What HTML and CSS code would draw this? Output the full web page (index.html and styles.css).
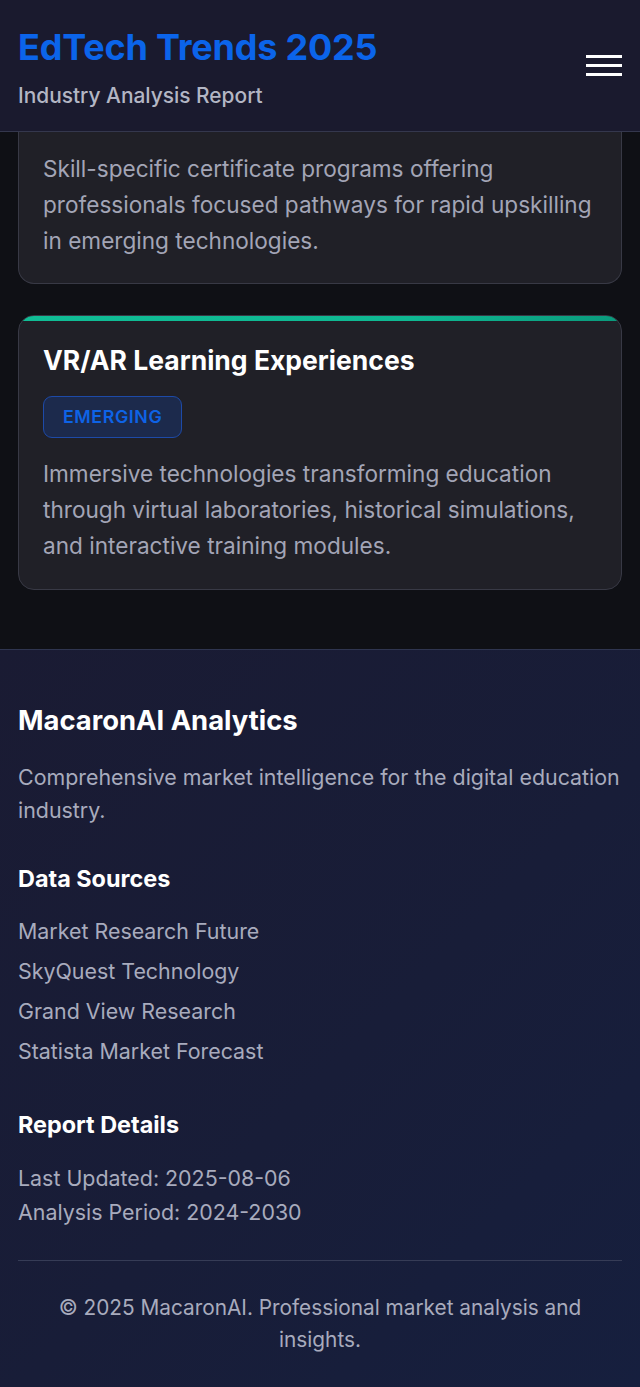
FILE: index.html
```html
<!DOCTYPE html>
<html lang="en">
<head>
<meta charset="utf-8">
<meta name="viewport" content="width=device-width, initial-scale=1">
<title>EdTech Trends 2025</title>
<link rel="stylesheet" href="styles.css">
</head>
<body>
<header class="site-header">
  <div class="brand">
    <h1 class="brand-title">EdTech Trends 2025</h1>
    <p class="brand-sub">Industry Analysis Report</p>
  </div>
  <button class="menu-btn" aria-label="Menu">
    <span class="menu-line"></span>
    <span class="menu-line"></span>
    <span class="menu-line"></span>
  </button>
</header>

<main class="content">
  <article class="card card-cut">
    <p class="card-text">Skill-specific certificate programs offering professionals focused pathways for rapid upskilling in emerging technologies.</p>
  </article>

  <article class="card card-accent">
    <h2 class="card-title">VR/AR Learning Experiences</h2>
    <span class="badge">Emerging</span>
    <p class="card-text">Immersive technologies transforming education through virtual laboratories, historical simulations, and interactive training modules.</p>
  </article>
</main>

<footer class="site-footer">
  <section class="foot-block foot-block-about">
    <h3 class="foot-brand">MacaronAI Analytics</h3>
    <p class="foot-text">Comprehensive market intelligence for the digital education industry.</p>
  </section>
  <section class="foot-block foot-block-sources">
    <h4 class="foot-head">Data Sources</h4>
    <ul class="foot-list">
      <li>Market Research Future</li>
      <li>SkyQuest Technology</li>
      <li>Grand View Research</li>
      <li>Statista Market Forecast</li>
    </ul>
  </section>
  <section class="foot-block foot-block-details">
    <h4 class="foot-head">Report Details</h4>
    <p class="foot-detail">Last Updated: 2025-08-06</p>
    <p class="foot-detail">Analysis Period: 2024-2030</p>
  </section>
  <div class="foot-bottom">
    <p class="copyright">© 2025 MacaronAI. Professional market analysis and insights.</p>
  </div>
</footer>
</body>
</html>
```

FILE: styles.css
```css
* { box-sizing: border-box; }

html, body {
  margin: 0;
  padding: 0;
}

body {
  background: #0f1015;
  font-family: Inter, "Noto Sans", "Liberation Sans", sans-serif;
  color: #ffffff;
}

.site-header {
  background: #1a1a2e;
  border-bottom: 1px solid #34374d;
  height: 132px;
  padding: 2px 18px 0;
  display: flex;
  align-items: center;
  justify-content: space-between;
}

.brand-title {
  margin: 0;
  font-size: 36px;
  line-height: 44px;
  font-weight: 700;
  color: #0b64ea;
  letter-spacing: -0.2px;
}

.brand-sub {
  margin: 14px 0 0;
  font-size: 20.9px;
  line-height: 26px;
  font-weight: 500;
  color: #b3b6c4;
}

.menu-btn {
  background: none;
  border: 0;
  padding: 0;
  width: 36px;
  display: flex;
  flex-direction: column;
  gap: 6.5px;
  margin-top: -2px;
  cursor: pointer;
}

.menu-line {
  display: block;
  height: 2.5px;
  width: 36px;
  background: #ffffff;
}

.content {
  padding: 0 18px 59px;
  display: flex;
  flex-direction: column;
  gap: 31px;
}

.card {
  background: #202027;
  border: 1px solid #383945;
  border-radius: 16px;
  padding: 24px 24px 25px;
  overflow: hidden;
}

.card-cut {
  border-top: 0;
  border-radius: 0 0 16px 16px;
  padding-top: 19px;
  padding-bottom: 24px;
}

.card-accent {
  position: relative;
  padding-top: 23px;
}

.card-accent::before {
  content: "";
  position: absolute;
  left: 0;
  right: 0;
  top: 0;
  height: 5px;
  background: linear-gradient(90deg, #10bd95 0%, #0fb892 65%, #0a9a7c 100%);
}

.card-title {
  margin: 0;
  font-size: 26.5px;
  line-height: 42px;
  font-weight: 700;
  color: #ffffff;
}

.badge {
  display: inline-block;
  margin-top: 15px;
  padding: 8px 19px;
  font-size: 17.8px;
  line-height: 24px;
  font-weight: 600;
  letter-spacing: 0.6px;
  text-transform: uppercase;
  color: #0e63e6;
  background: #1c2a4c;
  border: 1px solid #1d4aa8;
  border-radius: 9px;
}

.card-text {
  margin: 0;
  font-size: 22.6px;
  line-height: 36px;
  color: #a3a5b6;
}

.card-accent .card-text {
  margin-top: 18px;
}

.site-footer {
  border-top: 1px solid #2f3550;
  background: linear-gradient(135deg, #1a1b33 0%, #181d38 55%, #161f3e 100%);
  padding: 53px 18px 31px;
}

.foot-block-about {
  margin-bottom: 37px;
}

.foot-block-sources {
  margin-bottom: 39px;
}

.foot-block-details {
  margin-bottom: 31px;
}

.foot-brand {
  margin: 0;
  font-size: 27.4px;
  line-height: 34px;
  font-weight: 700;
  color: #ffffff;
}

.foot-text {
  margin: 24px 0 0;
  font-size: 21.4px;
  line-height: 33px;
  color: #a8abbd;
}

.foot-head {
  margin: 0;
  font-size: 23.4px;
  line-height: 30px;
  font-weight: 700;
  color: #ffffff;
}

.foot-list {
  list-style: none;
  margin: 17px 0 0;
  padding: 0;
}

.foot-list li {
  font-size: 21.4px;
  line-height: 40px;
  color: #a8abbd;
}

.foot-detail {
  margin: 0;
  font-size: 21.4px;
  line-height: 34px;
  color: #a8abbd;
}

.foot-head + .foot-detail {
  margin-top: 21px;
}

.foot-bottom {
  border-top: 1px solid #363c56;
  padding-top: 31px;
  text-align: center;
}

.copyright {
  margin: 0;
  font-size: 20.8px;
  line-height: 32px;
  color: #a8abbd;
}
```
